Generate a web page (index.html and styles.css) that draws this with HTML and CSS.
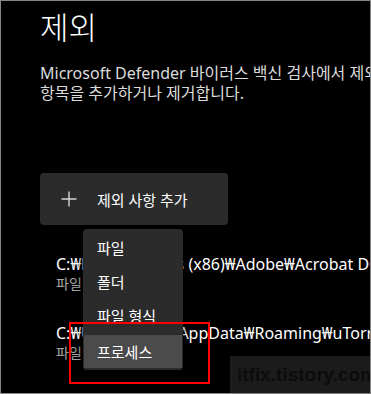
FILE: index.html
```html
<!DOCTYPE html>
<html lang="ko">
<head>
<meta charset="utf-8">
<link rel="stylesheet" href="styles.css">
</head>
<body>
<div class="frame">
  <div class="content">
    <h1 class="title">제외</h1>
    <p class="desc">
      <span class="line">Microsoft Defender 바이러스 백신 검사에서 제외할</span>
      <span class="line">항목을 추가하거나 제거합니다.</span>
    </p>
    <button class="add-btn">
      <svg class="plus" width="16" height="16" viewBox="0 0 16 16"><path d="M8 0.5V15.5M0.5 8H15.5" stroke="#d6d6d6" stroke-width="1.4" fill="none"/></svg>
      <span>제외 사항 추가</span>
    </button>
    <ul class="list">
      <li class="item">
        <span class="path">C:₩Program Files (x86)₩Adobe₩Acrobat DC₩Acrobat</span>
        <span class="kind">파일</span>
      </li>
      <li class="item">
        <span class="path">C:₩Users₩user₩AppData₩Roaming₩uTorrent₩uTorrent.exe</span>
        <span class="kind">파일</span>
      </li>
    </ul>
  </div>
  <div class="menu">
    <div class="menu-item">파일</div>
    <div class="menu-item">폴더</div>
    <div class="menu-item">파일 형식</div>
    <div class="menu-item active">프로세스</div>
  </div>
  <div class="highlight-box"></div>
  <div class="watermark">itfix.tistory.com</div>
</div>
</body>
</html>
```
FILE: styles.css
```css
* { box-sizing: border-box; }
html, body { margin: 0; padding: 0; background: #000; }
body {
  font-family: "Noto Sans", "Noto Sans CJK KR", sans-serif;
  color: #fff;
}
.frame {
  position: relative;
  width: 371px;
  height: 394px;
  border: 1px solid #858585;
  background: #000;
  overflow: hidden;
}
.content {
  padding: 6px 0 0 39px;
  white-space: nowrap;
}
.title {
  margin: 0;
  font-size: 31px;
  font-weight: 300;
  line-height: 40px;
  color: #fff;
}
.desc {
  margin: 16px 0 0;
  font-size: 16px;
  line-height: 20px;
  color: #dcdcdc;
}
.line { display: block; }
.add-btn {
  margin-top: 70px;
  width: 188px;
  height: 52px;
  display: flex;
  align-items: center;
  gap: 20px;
  padding: 0 0 0 21px;
  border: none;
  border-radius: 4px;
  background: #2b2b2b;
  color: #fff;
  font-family: inherit;
  font-size: 15px;
}
.list {
  list-style: none;
  margin: 30px 0 0;
  padding: 0 0 0 16px;
  display: flex;
  flex-direction: column;
  gap: 31px;
}
.item { display: flex; flex-direction: column; }
.path { font-size: 16px; line-height: 19px; color: #fff; }
.kind { font-size: 14px; line-height: 19px; color: #a8a8a8; }
.menu {
  position: absolute;
  left: 82px;
  top: 228px;
  width: 100px;
  height: 141px;
  background: #2b2b2b;
  border-radius: 4px;
  box-shadow: 0 4px 10px rgba(0,0,0,0.6);
  padding: 1px 1px 2px;
  display: flex;
  flex-direction: column;
}
.menu-item {
  height: 34px;
  display: flex;
  align-items: center;
  padding-left: 13px;
  font-size: 15px;
  color: #fff;
}
.menu-item.active {
  margin-top: 3px;
  height: 33px;
  background: #4b4b4b;
}
.highlight-box {
  position: absolute;
  left: 68px;
  top: 321px;
  width: 141px;
  height: 62px;
  border: 2px solid #ff0000;
}
.watermark {
  position: absolute;
  left: 229px;
  top: 355px;
  width: 150px;
  height: 40px;
  background: #1b1b1b;
  color: #0c0c0c;
  font-family: "Liberation Sans", Arial, sans-serif;
  font-weight: bold;
  font-size: 19px;
  line-height: 38px;
  padding-left: 7px;
}
```
